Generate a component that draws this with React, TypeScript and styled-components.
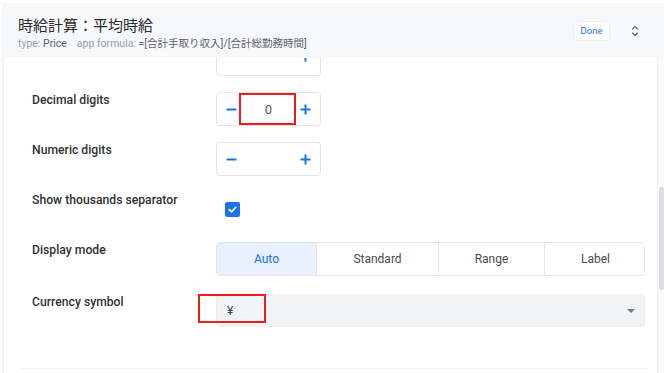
import React from "react";
import styled, { createGlobalStyle } from "styled-components";

const Global = createGlobalStyle`
  html, body { margin: 0; padding: 0; background: #ffffff; }
  body { font-family: Roboto, "Noto Sans CJK JP", "Liberation Sans", sans-serif; }
  * { box-sizing: border-box; }
`;

const Frame = styled.div`
  width: 664px;
  height: 373px;
  padding: 3px 0 0 2px;
  display: flex;
  flex-direction: column;
  overflow: hidden;
  background: #fff;
`;

const Header = styled.header`
  height: 55px;
  flex: none;
  background: #f7f8fa;
  display: flex;
  align-items: center;
  padding: 0 24px 0 16px;
  gap: 20px;
  position: relative;
  z-index: 1;
`;

const TitleBlock = styled.div`
  flex: 1;
  display: flex;
  flex-direction: column;
  gap: 2px;
  padding-top: 4px;
`;

const Title = styled.div`
  font-family: "Noto Sans CJK JP", Roboto, sans-serif;
  font-size: 15px;
  line-height: 20px;
  color: #2b2b2b;
`;

const Sub = styled.div`
  font-size: 10.5px;
  line-height: 13px;
  color: #9aa0a6;
  font-family: Roboto, "Noto Sans CJK JP", sans-serif;
`;

const Strong = styled.span`
  color: #5f6368;
`;

const Gap = styled.span`
  display: inline-block;
  width: 10px;
`;

const DoneButton = styled.button`
  width: 37px;
  height: 20px;
  border: 1px solid #eceef1;
  border-radius: 4px;
  background: #fff;
  color: #1a73e8;
  font-family: Roboto, sans-serif;
  font-size: 9.5px;
  padding: 0;
  cursor: pointer;
`;

const Body = styled.div`
  flex: 1;
  display: flex;
  min-height: 0;
`;

const Content = styled.div`
  flex: 1;
  border-left: 2px solid #f4f4f4;
  overflow: hidden;
  padding: 0 10px 0 12px;
  position: relative;
`;

const Scrolled = styled.div`
  margin-top: -22px;
  display: flex;
  flex-direction: column;
  gap: 16px;
`;

const Row = styled.div<{ $top?: number }>`
  display: grid;
  grid-template-columns: 200px 1fr;
  min-height: 34px;
  margin-top: ${(p) => p.$top ?? 0}px;
`;

const Label = styled.div`
  padding-left: 16px;
  font-size: 12.2px;
  line-height: 16px;
  font-weight: 500;
  color: #303134;
`;

const Stepper = styled.div<{ $h?: number }>`
  width: 105px;
  height: ${(p) => p.$h ?? 34}px;
  border: 1px solid #e3e3e3;
  border-radius: 4px;
  display: flex;
  align-items: center;
  justify-content: space-between;
  padding: 0 9px 0 9px;
  position: relative;
`;

const StepValue = styled.span`
  font-size: 13px;
  color: #555;
`;

const Highlight = styled.div<{ $l: number; $t: number; $w: number; $h: number }>`
  position: absolute;
  left: ${(p) => p.$l}px;
  top: ${(p) => p.$t}px;
  width: ${(p) => p.$w}px;
  height: ${(p) => p.$h}px;
  border: 2px solid #ea1c1c;
  pointer-events: none;
`;

const CheckWrap = styled.div`
  padding: 10px 0 0 9px;
`;

const Check = styled.span`
  width: 15px;
  height: 15px;
  border-radius: 2px;
  background: #1a73e8;
  display: flex;
  align-items: center;
  justify-content: center;
`;

const Segments = styled.div`
  display: flex;
  height: 34px;
  width: 429px;
  border: 1px solid #e6e6e6;
  border-radius: 4px;
  overflow: hidden;
`;

const Segment = styled.div<{ $active?: boolean; $w: number }>`
  width: ${(p) => p.$w}px;
  flex: none;
  display: flex;
  align-items: center;
  justify-content: center;
  font-size: 12px;
  color: ${(p) => (p.$active ? "#1a73e8" : "#4a4a4a")};
  background: ${(p) => (p.$active ? "#e8f0fe" : "#fff")};
  & + & {
    border-left: 1px solid #e6e6e6;
  }
`;

const Select = styled.div`
  width: 429px;
  height: 33px;
  background: #f1f3f4;
  border: 1px solid #eceef0;
  border-radius: 4px;
  display: flex;
  align-items: center;
  justify-content: space-between;
  padding: 0 9px 0 10px;
  position: relative;
  font-size: 12px;
  color: #444;
`;

const Arrow = styled.span`
  width: 0;
  height: 0;
  border-left: 4.5px solid transparent;
  border-right: 4.5px solid transparent;
  border-top: 4.5px solid #777;
`;

const BottomLine = styled.div`
  height: 1px;
  background: #efefef;
  margin: 40px 0 0 4px;
  width: 627px;
`;

const Scrollbar = styled.div`
  width: 7px;
  flex: none;
  border-left: 1px solid #f1f1f1;
  background: #fbfbfb;
  padding-top: 129px;
`;

const Thumb = styled.div`
  margin-left: 1px;
  width: 5px;
  height: 103px;
  border-radius: 3px;
  background: #dadce0;
`;

const Sorter = () => (
  <svg width="10" height="14" viewBox="0 0 10 14" fill="none" stroke="#6b6b6b" strokeWidth="1.3" strokeLinecap="round" strokeLinejoin="round">
    <path d="M2.5 5 L5 2.5 L7.5 5" />
    <path d="M2.5 9 L5 11.5 L7.5 9" />
  </svg>
);

const Minus = () => (
  <svg width="11" height="11" viewBox="0 0 11 11" fill="none" stroke="#1a73e8" strokeWidth="2">
    <path d="M0.5 5.5 H10.5" />
  </svg>
);

const Plus = () => (
  <svg width="11" height="11" viewBox="0 0 11 11" fill="none" stroke="#1a73e8" strokeWidth="2">
    <path d="M0.5 5.5 H10.5 M5.5 0.5 V10.5" />
  </svg>
);

export default function App() {
  return (
    <>
      <Global />
      <Frame>
        <Header>
          <TitleBlock>
            <Title>時給計算：平均時給</Title>
            <Sub>
              type: <Strong>Price</Strong>
              <Gap />app formula: <Strong>=[合計手取り収入]/[合計総勤務時間]</Strong>
            </Sub>
          </TitleBlock>
          <DoneButton>Done</DoneButton>
          <Sorter />
        </Header>
        <Body>
          <Content>
            <Scrolled>
              <Row>
                <Label />
                <Stepper $h={40}>
                  <Minus />
                  <Plus />
                </Stepper>
              </Row>
              <Row>
                <Label>Decimal digits</Label>
                <Stepper>
                  <Minus />
                  <StepValue>0</StepValue>
                  <Plus />
                  <Highlight $l={22} $t={0} $w={57} $h={32} />
                </Stepper>
              </Row>
              <Row>
                <Label>Numeric digits</Label>
                <Stepper>
                  <Minus />
                  <Plus />
                </Stepper>
              </Row>
              <Row>
                <Label>Show thousands separator</Label>
                <CheckWrap>
                  <Check>
                    <svg width="11" height="11" viewBox="0 0 12 12" fill="none" stroke="#fff" strokeWidth="1.8" strokeLinecap="round" strokeLinejoin="round">
                      <path d="M2.5 6.2 L5 8.6 L9.6 3.6" />
                    </svg>
                  </Check>
                </CheckWrap>
              </Row>
              <Row>
                <Label>Display mode</Label>
                <Segments>
                  <Segment $active $w={99}>Auto</Segment>
                  <Segment $w={122}>Standard</Segment>
                  <Segment $w={106}>Range</Segment>
                  <Segment $w={102}>Label</Segment>
                </Segments>
              </Row>
              <Row $top={2}>
                <Label>Currency symbol</Label>
                <Select>
                  <span>¥</span>
                  <Arrow />
                  <Highlight $l={-19} $t={-1} $w={68} $h={29} />
                </Select>
              </Row>
            </Scrolled>
            <BottomLine />
          </Content>
          <Scrollbar>
            <Thumb />
          </Scrollbar>
        </Body>
      </Frame>
    </>
  );
}
